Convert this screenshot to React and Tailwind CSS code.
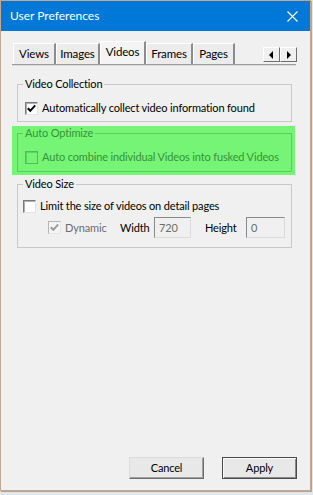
import React from "react";

function Check({ checked = false, variant = "normal" }) {
  let cls =
    "border-t-[#7a7a7a] border-l-[#7a7a7a] border-r-[#e3e3e3] border-b-[#e3e3e3] bg-white shadow-[inset_1px_1px_0_#b0b0b0]";
  let stroke = "#000";
  if (variant === "green") {
    cls = "border-[#52bd52] bg-[#76f476] shadow-[inset_1px_1px_0_#5fd35f]";
  } else if (variant === "disabled") {
    cls =
      "border-t-[#b5b5b5] border-l-[#b5b5b5] border-r-[#e6e6e6] border-b-[#e6e6e6] bg-[#f4f4f4]";
    stroke = "#9a9a9a";
  }
  return (
    <span className={`w-[13px] h-[13px] border flex items-center justify-center shrink-0 ${cls}`}>
      {checked && (
        <svg width="11" height="11" viewBox="0 0 11 11">
          <path d="M1.8 5.2 L4.3 7.8 L9.2 2.4" fill="none" stroke={stroke} strokeWidth="2" />
        </svg>
      )}
    </span>
  );
}

function Tab({ label, w, selected }) {
  return (
    <div
      className={`${w} flex items-center justify-center border-t border-l border-t-white border-l-white border-r-2 border-r-[#8c8c8c] ${
        selected ? "h-[23px] bg-[#f4f4f4]" : "h-[21px] bg-[#ececec]"
      }`}
    >
      <span className={selected ? "-mt-[3px]" : ""}>{label}</span>
    </div>
  );
}

function ArrowBtn({ dir }) {
  return (
    <div className="w-[17px] h-[15px] bg-[#f0f0f0] border border-t-white border-l-white border-r-[#6e6e6e] border-b-[#6e6e6e] flex items-center justify-center">
      <svg width="5" height="8" viewBox="0 0 5 8">
        {dir === "left" ? <path d="M4 0 L0 4 L4 8 Z" fill="#000" /> : <path d="M1 0 L5 4 L1 8 Z" fill="#000" />}
      </svg>
    </div>
  );
}

export default function App() {
  return (
    <div className="w-[313px] h-[495px] bg-[#e6e6e6] overflow-hidden font-['Lato',sans-serif] text-[11px] tracking-[-0.15px] leading-[16px] text-black whitespace-nowrap">
      <div className="w-[311px] h-[491px] border border-[#c9a68a] bg-[#f0f0f0] flex flex-col shadow-[1px_1px_0_#a8a8a8]">
        {/* Title bar */}
        <div className="h-[30px] shrink-0 bg-[#0078d7] flex items-center justify-between pl-[9px] pr-[12px] text-white text-[12px] tracking-normal">
          <span>User Preferences</span>
          <svg width="11" height="11" viewBox="0 0 11 11">
            <path d="M0.5 0.5 L10.5 10.5 M10.5 0.5 L0.5 10.5" stroke="white" strokeWidth="1.1" />
          </svg>
        </div>

        {/* Body */}
        <div className="flex-1 flex flex-col pl-[11px] pr-[13px]">
          {/* Tab strip */}
          <div className="mt-[10px] flex items-end h-[23px] text-[11.5px]">
            <div className="w-[1px]" />
            <Tab label="Views" w="w-[43px]" />
            <Tab label="Images" w="w-[44px]" />
            <Tab label="Videos" w="w-[46px]" selected />
            <Tab label="Frames" w="w-[47px]" />
            <Tab label="Pages" w="w-[42px]" />
            <div className="ml-auto mb-[2px] flex">
              <ArrowBtn dir="left" />
              <ArrowBtn dir="right" />
            </div>
          </div>
          <div className="h-[2px] border-t border-t-[#9c9c9c] border-b border-b-[#dcdcdc] mr-[1px]" />

          {/* Panel */}
          <div className="pl-[5px] flex flex-col">
            {/* Video Collection */}
            <fieldset className="mt-[10px] mr-[5px] border border-[#c8c8c8] pl-[7px] pr-[7px] pt-[8px] pb-[5px] min-w-0">
              <legend className="ml-[-2px] px-[2px] leading-[16px]">Video Collection</legend>
              <div className="flex items-center h-[16px] gap-[4px]">
                <Check checked />
                <span>Automatically collect video information found</span>
              </div>
            </fieldset>

            {/* Auto Optimize (highlighted) */}
            <div className="mt-[4px] -ml-[5px] mr-[2px] bg-[#76f476] pl-[5px] pr-[3px] pb-[3px]">
              <fieldset className="border border-[#56cf56] pl-[7px] pr-[7px] pt-[9px] pb-[6px] min-w-0 text-[#359535]">
                <legend className="ml-[-2px] px-[2px] leading-[14px]">Auto Optimize</legend>
                <div className="flex items-center h-[16px] gap-[4px]">
                  <Check variant="green" />
                  <span>Auto combine individual Videos into fusked Videos</span>
                </div>
              </fieldset>
            </div>

            {/* Video Size */}
            <fieldset className="mt-[1px] mr-[5px] border border-[#c8c8c8] pl-[5px] pr-[5px] pt-[6px] pb-[9px] min-w-0">
              <legend className="ml-[0px] px-[2px] leading-[16px]">Video Size</legend>
              <div className="flex items-center h-[16px] gap-[4px]">
                <Check />
                <span>Limit the size of videos on detail pages</span>
              </div>
              <div className="mt-[3px] flex items-center h-[21px]">
                <div className="ml-[25px] w-[72px] flex items-center gap-[4px]">
                  <Check checked variant="disabled" />
                  <span className="text-[#6d6d6d]">Dynamic</span>
                </div>
                <span className="w-[34px]">Width</span>
                <div className="w-[37px] h-[21px] border border-t-[#8a8a8a] border-l-[#8a8a8a] border-r-[#dadada] border-b-[#dadada] bg-[#f0f0f0] pl-[4px] flex items-center text-[#6d6d6d]">
                  720
                </div>
                <span className="ml-[14px] w-[41px]">Height</span>
                <div className="w-[39px] h-[21px] border border-t-[#8a8a8a] border-l-[#8a8a8a] border-r-[#dadada] border-b-[#dadada] bg-[#f0f0f0] pl-[4px] flex items-center text-[#6d6d6d]">
                  0
                </div>
              </div>
            </fieldset>
          </div>

          {/* Buttons */}
          <div className="mt-auto mb-[11px] flex justify-end gap-[18px]">
            <button className="w-[75px] h-[22px] bg-[#e8e8e8] border border-t-[#dcdcdc] border-l-[#dcdcdc] border-r-[#6e6e6e] border-b-[#6e6e6e] shadow-[inset_-1px_-1px_0_#a0a0a0] text-black">
              Cancel
            </button>
            <button className="w-[75px] h-[22px] bg-[#e8e8e8] border border-[#4a4a4a] shadow-[inset_1px_1px_0_#f8f8f8,inset_-1px_-1px_0_#8a8a8a] text-black">
              Apply
            </button>
          </div>
        </div>
      </div>
    </div>
  );
}
